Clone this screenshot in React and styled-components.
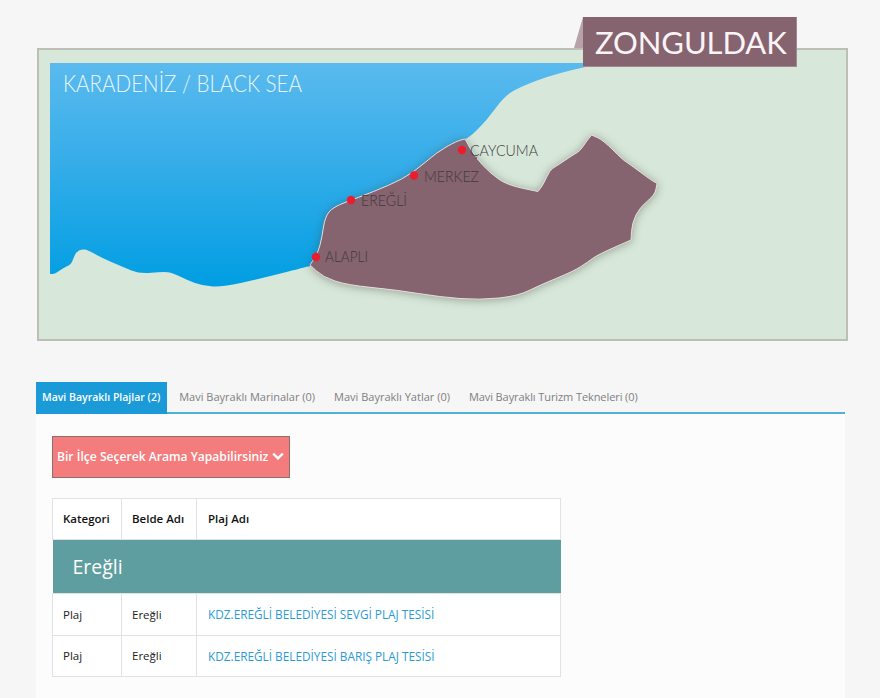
import React from "react"
import styled, { createGlobalStyle } from "styled-components"

const GlobalStyle = createGlobalStyle`
  html, body { margin: 0; padding: 0; background: #f6f6f6; }
  body { font-family: "Open Sans", "Liberation Sans", sans-serif; }
`

const Page = styled.div`
  width: 880px;
  height: 698px;
  overflow: hidden;
  box-sizing: border-box;
  padding: 48px 35px 0 36px;
`

const MapFrame = styled.div`
  position: relative;
  width: 811px;
  height: 293px;
  margin-left: 1px;
  box-sizing: border-box;
  border: 2px solid #bdbfb6;
  background: #d7e8da;
`

const MapSvg = styled.svg`
  display: block;
  width: 807px;
  height: 289px;
`

const Province = styled.path`
  fill: #85636f;
  stroke: #efe6e8;
  stroke-width: 0.9;
  stroke-linejoin: round;
  filter: drop-shadow(0 1px 5px rgba(70, 70, 60, 0.45));
`

const MapText = styled.text`
  font-family: Lato, "Open Sans", sans-serif;
  font-weight: 300;
  font-size: ${props => props.$size}px;
  fill: ${props => props.$color};
`

const Banner = styled.div`
  position: absolute;
  top: -33px;
  left: 544px;
  width: 214px;
  height: 50px;
  box-sizing: border-box;
  padding-left: 12px;
  background: #85636f;
  border-right: 1px solid #9d8a90;
  border-bottom: 1px solid #9d8a90;
  color: #fbf4f6;
  font-family: Lato, "Open Sans", sans-serif;
  font-size: 31px;
  line-height: 51px;
  letter-spacing: -0.1px;
  white-space: nowrap;

  &::before {
    content: "";
    position: absolute;
    left: -9px;
    top: 0;
    border-style: solid;
    border-width: 0 0 31px 9px;
    border-color: transparent transparent #b8a2aa transparent;
  }
`

const Tabs = styled.div`
  display: flex;
  height: 32px;
  margin-top: 41px;
  box-sizing: border-box;
  border-bottom: 2px solid #4eb1d9;
`

const Tab = styled.div`
  height: 32px;
  box-sizing: border-box;
  padding: 0 ${props => (props.$active ? "7px" : "6px")} 0 ${props => (props.$active ? "6px" : "12px")};
  margin-right: ${props => (props.$active ? "0" : "1px")};
  background: ${props => (props.$active ? "#1a9ad6" : "transparent")};
  color: ${props => (props.$active ? "#fff" : "#7f7f7f")};
  font-size: ${props => (props.$active ? "10.5px" : "11px")};
  font-weight: ${props => (props.$active ? 600 : 400)};
  letter-spacing: ${props => props.$tight ? "-0.09px" : "0"};
  line-height: 30px;
  white-space: nowrap;
`

const Panel = styled.div`
  height: 284px;
  box-sizing: border-box;
  padding: 22px 16px 0;
  background: #fcfcfc;
`

const FilterButton = styled.button`
  display: flex;
  align-items: center;
  gap: 4px;
  width: 238px;
  height: 42px;
  box-sizing: border-box;
  padding: 0 0 2px 4px;
  border: 1px solid #8f6d6d;
  background: #f47c7c;
  color: #fff;
  font-family: inherit;
  font-size: 12.1px;
  font-weight: 600;
  white-space: nowrap;
`

const Table = styled.table`
  width: 508px;
  margin-top: 20px;
  border-collapse: collapse;
  table-layout: fixed;
  font-size: 11.5px;
  color: #222;
  background: #fff;
`

const Cell = styled.td`
  height: 41.5px;
  box-sizing: border-box;
  padding: 0 10px;
  border: 1px solid #e2e2e2;
  white-space: nowrap;

  &:last-child {
    padding-left: 11px;
  }
`

const HeadCell = styled.th`
  height: 41px;
  box-sizing: border-box;
  padding: 0 10px 2px;
  border: 1px solid #e2e2e2;
  color: #111;
  font-size: 11.5px;
  font-weight: 600;
  text-align: left;
  white-space: nowrap;

  &:last-child {
    padding-left: 11px;
  }
`

const GroupCell = styled.td`
  height: 54px;
  box-sizing: border-box;
  padding: 0 20px;
  background: #5f9ea0;
  color: #fff;
  font-size: 19.5px;
`

const BeachLink = styled.a`
  color: #2a9ad6;
  font-size: 11.8px;
`

// smooth line through the points, a repeated point stays a sharp corner
const smooth = points => {
  let d = `M${points[0][0]} ${points[0][1]}`
  for (let i = 1; i < points.length - 1; i++) {
    const [x, y] = points[i]
    const [nx, ny] = points[i + 1]
    d += ` Q${x} ${y} ${(x + nx) / 2} ${(y + ny) / 2}`
  }
  const last = points[points.length - 1]
  return `${d} L${last[0]} ${last[1]}`
}

const seaCoast = [
  [590, 66], [557, 73], [517, 88], [503, 98], [487, 120], [468, 139], [457, 141], [437, 152], [413, 173],
  [390, 185], [357, 198], [333, 207], [325, 217], [322, 237], [318, 253], [310, 266], [310, 266],
  [263, 278], [223, 287], [203, 286], [187, 280], [173, 273], [163, 271.5], [140, 274], [123, 267],
  [102, 258], [88, 250], [82, 249], [76, 252], [72, 262], [70, 265], [63, 268], [55, 274], [50, 274],
]

const provinceEdge = [
  [310, 265], [310, 265], [318, 253], [322, 237], [325, 217], [333, 207], [357, 198], [390, 185], [413, 173],
  [437, 152], [457, 141], [465, 139], [465, 139], [475, 157], [490, 173], [507, 185], [538, 191.5], [538, 191.5],
  [543, 185], [550, 170], [555, 167], [573, 155], [580, 151], [586, 142], [591.5, 135], [591.5, 135], [603, 140],
  [623, 160], [628, 163], [653, 181.5], [657, 183], [657, 183], [655, 195], [640, 207], [632, 223], [631, 240],
  [631, 240], [597, 255], [588, 262], [573, 271.5], [540, 285], [518, 296], [480, 300], [440, 297], [397, 290],
  [347, 285], [323, 277], [310, 265], [310, 265],
]

const pins = [
  { name: "ALAPLI", x: 316, y: 257, labelX: 325, baseline: 262, width: 43 },
  { name: "EREĞLİ", x: 351, y: 200, labelX: 361, baseline: 206, width: 46 },
  { name: "MERKEZ", x: 414, y: 175.5, labelX: 424, baseline: 181.5, width: 55 },
  { name: "ÇAYCUMA", x: 462, y: 150, labelX: 470, baseline: 155.5, width: 68 },
]

const tabs = [
  "Mavi Bayraklı Plajlar (2)",
  "Mavi Bayraklı Marinalar (0)",
  "Mavi Bayraklı Yatlar (0)",
  "Mavi Bayraklı Turizm Tekneleri (0)",
]

const beaches = [
  "KDZ.EREĞLİ BELEDİYESİ SEVGİ PLAJ TESİSİ",
  "KDZ.EREĞLİ BELEDİYESİ BARIŞ PLAJ TESİSİ",
]

const App = () => (
  <Page>
    <GlobalStyle />
    <MapFrame>
      {/* viewBox keeps the page coordinates of the map */}
      <MapSvg viewBox="39 50 807 289">
        <defs>
          <linearGradient id="sea" x1="0" y1="0" x2="0" y2="1">
            <stop offset="0" stopColor="#5abaee" />
            <stop offset="0.45" stopColor="#35ade9" />
            <stop offset="1" stopColor="#009ee2" />
          </linearGradient>
        </defs>
        <path fill="url(#sea)" d={`M50 63 L590 63 L590 66 ${smooth(seaCoast).replace(/^M\S+ \S+/, "")} Z`} />
        <Province d={`${smooth(provinceEdge)} Z`} />
        <MapText $size={23} $color="#e8f6fd" x={63} y={91.5} textLength={239} lengthAdjust="spacingAndGlyphs">
          KARADENİZ / BLACK SEA
        </MapText>
        {pins.map(pin => (
          <g key={pin.name}>
            <circle cx={pin.x} cy={pin.y} r={4.2} fill="#ec1c2d" />
            <MapText
              $size={16}
              $color="#3f3a3d"
              x={pin.labelX}
              y={pin.baseline}
              textLength={pin.width}
              lengthAdjust="spacingAndGlyphs"
            >
              {pin.name}
            </MapText>
          </g>
        ))}
      </MapSvg>
      <Banner>ZONGULDAK</Banner>
    </MapFrame>
    <Tabs>
      {tabs.map((tab, i) => (
        <Tab key={tab} $active={i === 0} $tight={i === 3}>{tab}</Tab>
      ))}
    </Tabs>
    <Panel>
      <FilterButton>
        Bir İlçe Seçerek Arama Yapabilirsiniz
        <svg width="12" height="9" viewBox="0 0 12 9">
          <path d="M1.2 1.6 L6 6.4 L10.8 1.6" fill="none" stroke="#fff" strokeWidth="2.4" />
        </svg>
      </FilterButton>
      <Table>
        <colgroup>
          <col width="69" />
          <col width="75" />
          <col width="364" />
        </colgroup>
        <thead>
          <tr>
            <HeadCell>Kategori</HeadCell>
            <HeadCell>Belde Adı</HeadCell>
            <HeadCell>Plaj Adı</HeadCell>
          </tr>
        </thead>
        <tbody>
          <tr>
            <GroupCell colSpan={3}>Ereğli</GroupCell>
          </tr>
          {beaches.map(beach => (
            <tr key={beach}>
              <Cell>Plaj</Cell>
              <Cell>Ereğli</Cell>
              <Cell><BeachLink>{beach}</BeachLink></Cell>
            </tr>
          ))}
        </tbody>
      </Table>
    </Panel>
  </Page>
)

export default App
